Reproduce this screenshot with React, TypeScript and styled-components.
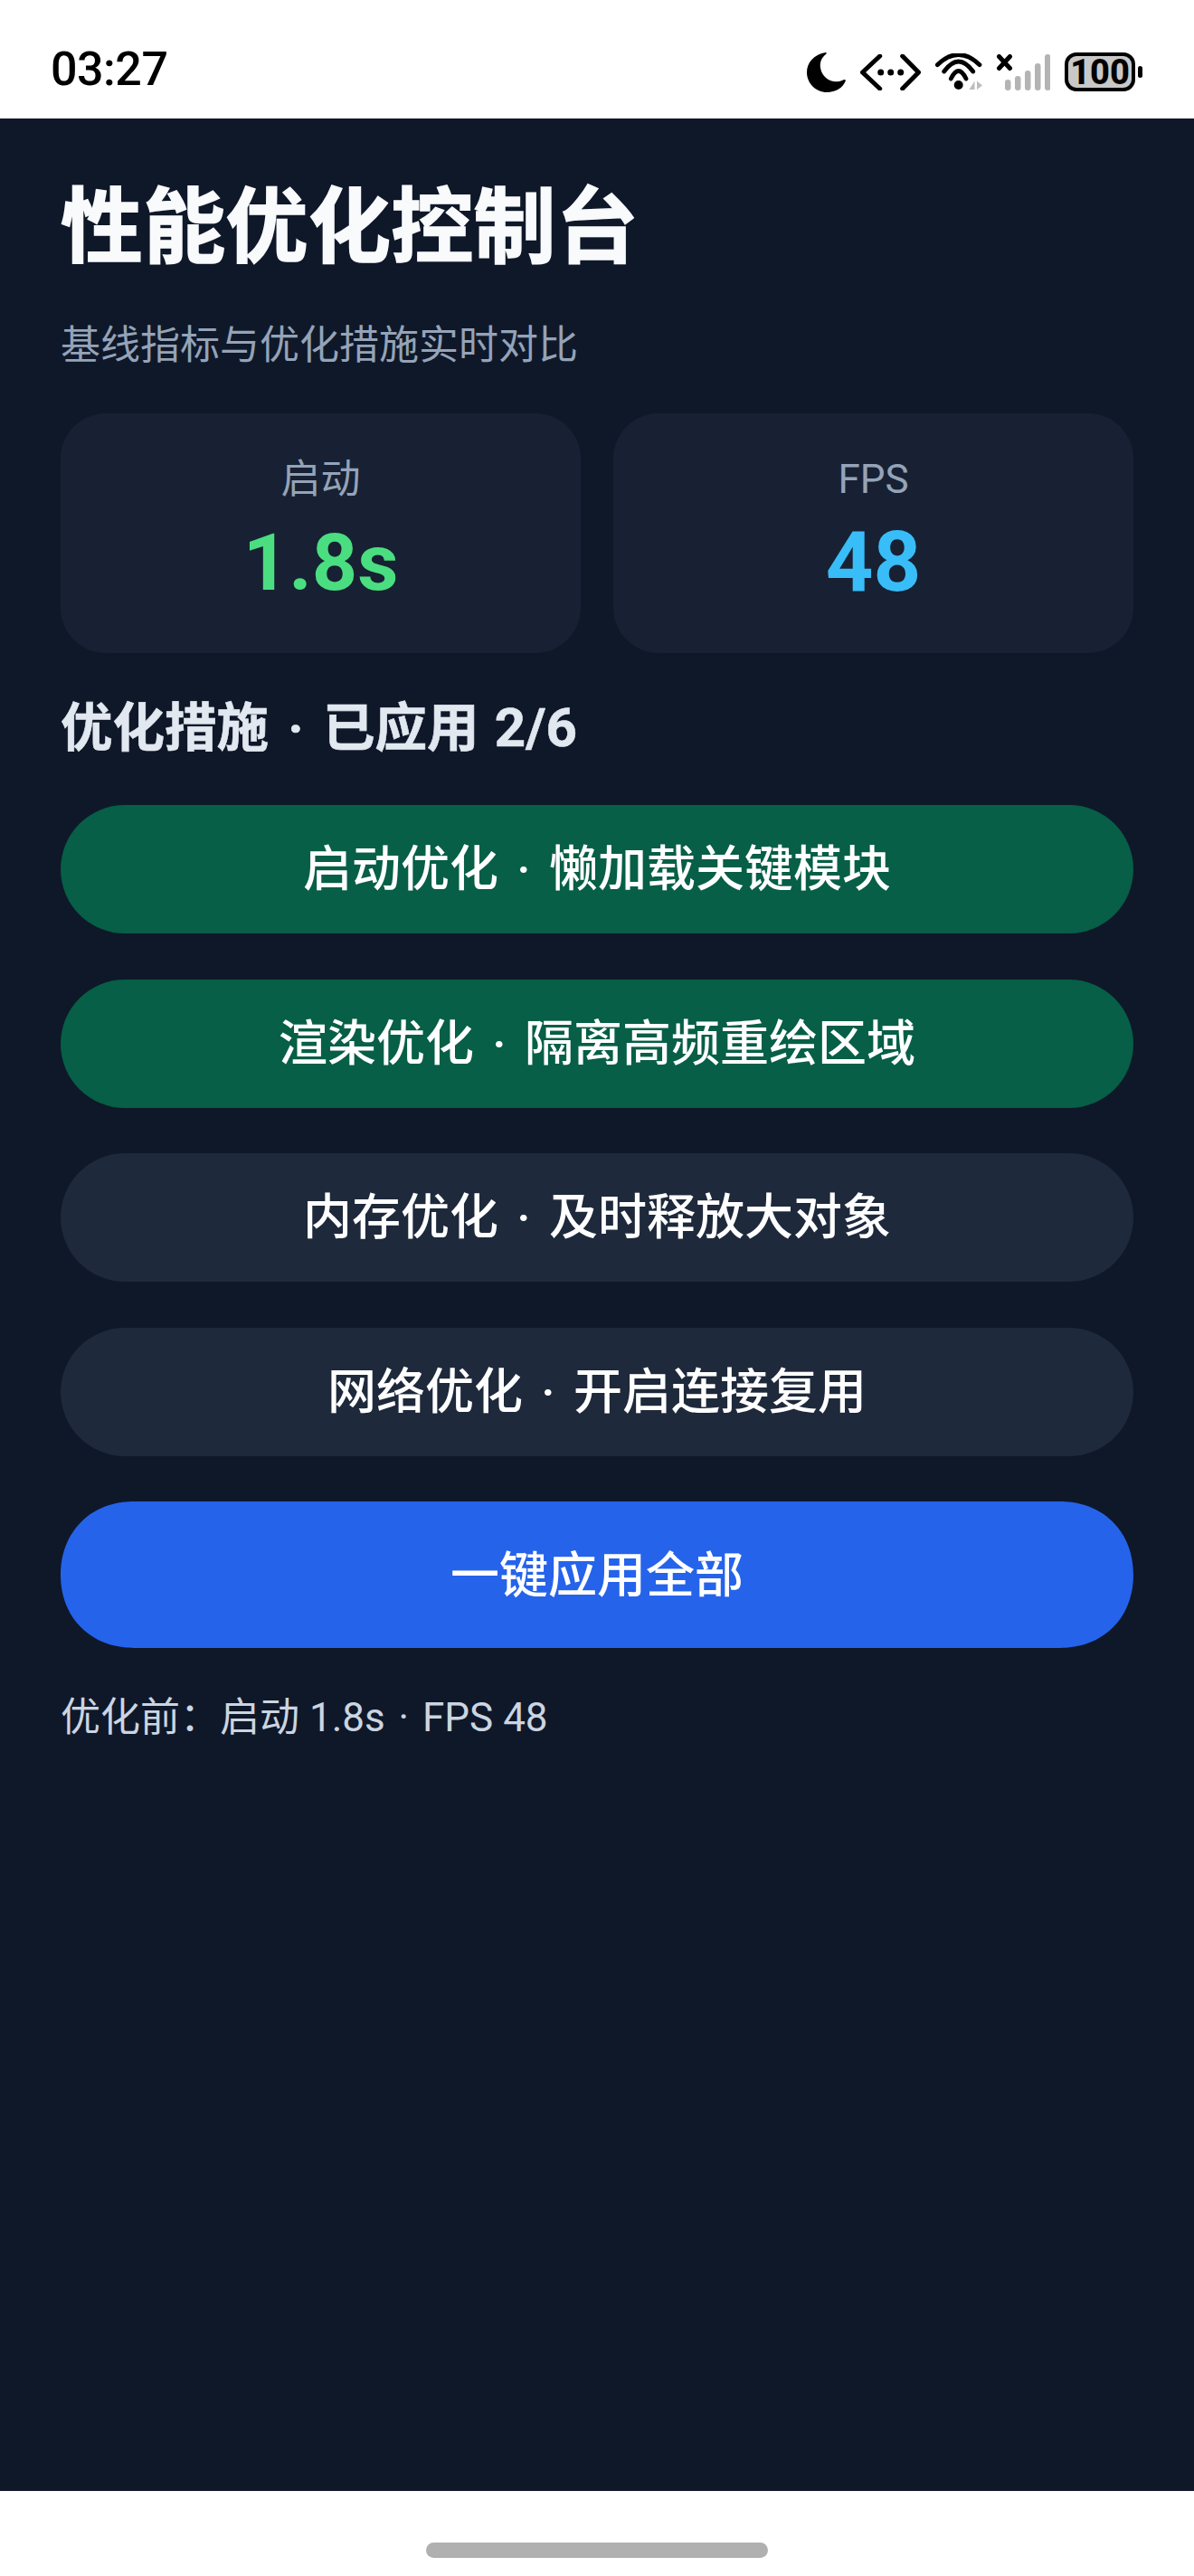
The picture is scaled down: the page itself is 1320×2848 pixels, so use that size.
import styled, { createGlobalStyle } from 'styled-components';

const GlobalStyle = createGlobalStyle`
  html, body {
    margin: 0;
    padding: 0;
    background: #fff;
  }
  * {
    box-sizing: border-box;
  }
`;

const Screen = styled.div`
  width: 1320px;
  height: 2848px;
  display: flex;
  flex-direction: column;
  font-family: Roboto, "Noto Sans CJK SC", sans-serif;
`;

const StatusBar = styled.div`
  height: 131px;
  flex: none;
  display: flex;
  align-items: center;
  justify-content: space-between;
  padding: 28px 57px 0 56px;
  background: #fff;
`;

const Time = styled.div`
  font-size: 52px;
  line-height: 60px;
  font-weight: 500;
  letter-spacing: -0.5px;
  color: #000;
  margin-top: -5px;
`;

const StatusIcons = styled.div`
  display: flex;
  align-items: center;
  gap: 16px;
`;

const Battery = styled.div`
  display: flex;
  align-items: center;
  gap: 3px;
`;

const BatteryBody = styled.div`
  width: 78px;
  height: 43px;
  display: flex;
  align-items: center;
  justify-content: center;
  border: 4px solid #000;
  border-radius: 13px;
  background: #c8c8c8;
  font-size: 38px;
  font-weight: 800;
  color: #000;
`;

const BatteryNub = styled.div`
  width: 5px;
  height: 13px;
  border-radius: 3px;
  background: #000;
`;

const Main = styled.div`
  flex: 1;
  padding: 61px 67px 0;
  background: #0f1829;
`;

const Title = styled.h1`
  margin: 0;
  font-size: 91px;
  line-height: 120px;
  font-weight: 700;
  letter-spacing: 0.3px;
  -webkit-text-stroke: 1.5px #f8fafc;
  color: #f8fafc;
`;

const Subtitle = styled.p`
  margin: 40px 0 0;
  font-size: 44px;
  line-height: 60px;
  color: #94a3b8;
`;

const Cards = styled.div`
  display: grid;
  grid-template-columns: 1fr 1fr;
  gap: 36px;
  margin-top: 45px;
`;

const Card = styled.div`
  height: 265px;
  display: flex;
  flex-direction: column;
  align-items: center;
  padding-top: 43px;
  border-radius: 50px;
  background: #172133;
`;

const CardLabel = styled.div`
  font-size: 44px;
  line-height: 60px;
  color: #94a3b8;
`;

const CardValue = styled.div<{ $color: string; $size: number }>`
  margin-top: 12px;
  font-size: ${(p) => p.$size}px;
  line-height: 100px;
  font-weight: 700;
  color: ${(p) => p.$color};
`;

const SectionTitle = styled.h2`
  margin: 49px 0 0;
  font-size: 57.5px;
  line-height: 70px;
  font-weight: 700;
  -webkit-text-stroke: 0.6px #e2e8f0;
  color: #e2e8f0;
`;

const Count = styled.span`
  margin-left: 3px;
  font-size: 60px;
  line-height: 1;
`;

// the middle dot sits wider in the original font than in Roboto
const Dot = styled.span<{ $gap: number }>`
  margin: 0 ${(p) => p.$gap}px;
`;

const Options = styled.div`
  display: flex;
  flex-direction: column;
  gap: 50.5px;
  margin-top: 49px;
`;

const Option = styled.div<{ $active: boolean }>`
  height: 142px;
  display: flex;
  align-items: center;
  justify-content: center;
  padding-bottom: 9px;
  border-radius: 71px;
  background: ${(p) => (p.$active ? '#065f46' : '#1e293b')};
  font-size: 54px;
  font-weight: 500;
  color: #fff;
`;

const ApplyButton = styled.div`
  height: 162px;
  display: flex;
  align-items: center;
  justify-content: center;
  margin-top: 50.5px;
  padding-bottom: 8px;
  border-radius: 81px;
  corner-shape: superellipse(1.08);
  background: #2563eb;
  font-size: 54px;
  font-weight: 500;
  color: #fff;
`;

const Footnote = styled.p`
  margin: 47px 0 0;
  font-size: 44px;
  line-height: 60px;
  color: #cbd5e1;
`;

const NavBar = styled.div`
  height: 94px;
  flex: none;
  display: flex;
  justify-content: center;
  padding-top: 57px;
  background: #fff;
`;

const HomePill = styled.div`
  width: 378px;
  height: 17px;
  border-radius: 9px;
  background: #b0b0b0;
`;

function MoonIcon() {
  return (
    <svg width="43" height="45" viewBox="0 0 43 45">
      <path
        d="M21 1C8 3 0 12 0 23C0 35 10 45 22 45C32 45 40 40 43 32C42 30.500 41 31 39 32C29 36 17 30 15 18C14 11 17 6 21 3C22 2 22 1 21 1Z"
        fill="#000"
      />
    </svg>
  );
}

function CodeIcon() {
  return (
    <svg width="67" height="40" viewBox="0 0 67 40">
      <path
        d="M21.700 2L2.500 20L21.700 38M46.700 2L64.500 20L46.700 38"
        fill="none"
        stroke="#000"
        strokeWidth="5"
        strokeLinecap="round"
        strokeLinejoin="round"
      />
      <circle cx="22.700" cy="20" r="3.500" fill="#000" />
      <circle cx="33.700" cy="20" r="3.500" fill="#000" />
      <circle cx="44.700" cy="20" r="3.500" fill="#000" />
    </svg>
  );
}

function WifiIcon() {
  return (
    <svg width="52" height="41" viewBox="0 0 52 41">
      <path
        d="M2.300 12.700Q25.700 -9.700 49 12.700M9.700 20Q25.700 -2 41.700 20M17.300 28Q25.700 11 34 28"
        fill="none"
        stroke="#000"
        strokeWidth="4.800"
        strokeLinecap="round"
      />
      <circle cx="25.700" cy="35" r="5" fill="#000" />
      <path d="M43.500 30.500V40H37.500ZM46 30.500L52 35.500L46 40Z" fill="#bdbdbd" />
    </svg>
  );
}

function SignalIcon() {
  const bars = [28, 24, 18, 10, 0];
  return (
    <svg width="59" height="40" viewBox="0 0 59 40">
      <path d="M2.500 2.500L14.500 15.500M14.500 2.500L2.500 15.500" stroke="#000" strokeWidth="5" strokeLinecap="round" />
      {bars.map((top, i) => (
        <rect key={i} x={9 + i * 11} y={top} width="6.500" height={40 - top} rx="3.200" fill="#b4b4b4" />
      ))}
    </svg>
  );
}

const options = [
  { name: '启动优化', detail: '懒加载关键模块', active: true },
  { name: '渲染优化', detail: '隔离高频重绘区域', active: true },
  { name: '内存优化', detail: '及时释放大对象', active: false },
  { name: '网络优化', detail: '开启连接复用', active: false },
];

export default function App() {
  return (
    <Screen>
      <GlobalStyle />
      <StatusBar>
        <Time>03:27</Time>
        <StatusIcons>
          <MoonIcon />
          <CodeIcon />
          <WifiIcon />
          <SignalIcon />
          <Battery>
            <BatteryBody>100</BatteryBody>
            <BatteryNub />
          </Battery>
        </StatusIcons>
      </StatusBar>
      <Main>
        <Title>性能优化控制台</Title>
        <Subtitle>基线指标与优化措施实时对比</Subtitle>
        <Cards>
          <Card>
            <CardLabel>启动</CardLabel>
            <CardValue $color="#4ade80" $size={88}>1.8s</CardValue>
          </Card>
          <Card>
            <CardLabel>FPS</CardLabel>
            <CardValue $color="#38bdf8" $size={92}>48</CardValue>
          </Card>
        </Cards>
        <SectionTitle>
          优化措施 <Dot $gap={7}>·</Dot> 已应用 <Count>2/6</Count>
        </SectionTitle>
        <Options>
          {options.map((o) => (
            <Option key={o.name} $active={o.active}>
              <span>
                {o.name} <Dot $gap={7}>·</Dot> {o.detail}
              </span>
            </Option>
          ))}
        </Options>
        <ApplyButton>一键应用全部</ApplyButton>
        <Footnote>
          优化前：启动 1.8s <Dot $gap={4}>·</Dot> FPS 48
        </Footnote>
      </Main>
      <NavBar>
        <HomePill />
      </NavBar>
    </Screen>
  );
}
